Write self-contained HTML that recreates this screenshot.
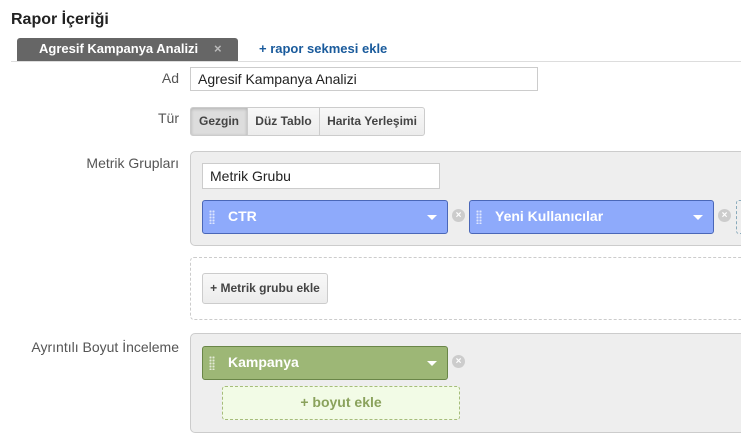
<!DOCTYPE html>
<html><head><meta charset="utf-8"><style>
*{box-sizing:border-box;margin:0;padding:0}
body{width:741px;height:435px;overflow:hidden;background:#fff;font-family:"Liberation Sans",Arial,sans-serif;position:relative;color:#333}
.a{position:absolute}
.lbl{font-size:14px;color:#555;text-align:right;width:179px;left:0}
.inp{border:1px solid #ccc;background:#fff;font-size:14px;color:#222;padding-left:7px;line-height:22px}
.btn{border:1px solid #ccc;background:linear-gradient(#f8f8f8,#ececec);font-size:12px;font-weight:bold;color:#444;text-align:center;line-height:27px}
.chip{border-radius:3px;color:#fff;font-weight:bold;font-size:14px;line-height:31px;padding-left:25px}
.grip{position:absolute;left:6px;top:9px;width:6px;height:14px;background-image:radial-gradient(circle,rgba(255,255,255,.7) 1px,transparent 1.2px);background-size:3px 3px}
.arr{position:absolute;right:10px;top:14px;width:0;height:0;border-left:5px solid transparent;border-right:5px solid transparent;border-top:5px solid #fff}
.x{width:13px;height:13px;border-radius:50%;background:#ccc;color:#fff;font-size:10px;line-height:13px;text-align:center;font-weight:bold}
</style></head><body>
<div class="a" style="left:11px;top:11px;font-size:16px;font-weight:bold;color:#222">Rapor İçeriği</div>
<div class="a" style="left:17px;top:38px;width:221px;height:23px;background:#666;border-radius:3px 3px 0 0;color:#fff;font-weight:bold;font-size:13px;line-height:22px;padding-left:22px">Agresif Kampanya Analizi<span style="position:absolute;left:197px;color:#bbb">×</span></div>
<div class="a" style="left:259px;top:41px;font-size:13px;font-weight:bold;color:#1a5b9c">+ rapor sekmesi ekle</div>
<div class="a" style="left:11px;top:61px;width:730px;height:1px;background:#ddd"></div>
<div class="a lbl" style="top:70px">Ad</div>
<div class="a inp" style="left:190px;top:67px;width:348px;height:24px">Agresif Kampanya Analizi</div>
<div class="a lbl" style="top:110px">Tür</div>
<div class="a btn" style="left:190px;top:107px;width:58px;height:29px;background:#ddd;box-shadow:inset 0 1px 3px rgba(0,0,0,.2);border-radius:3px 0 0 3px">Gezgin</div>
<div class="a btn" style="left:247px;top:107px;width:73px;height:29px">Düz Tablo</div>
<div class="a btn" style="left:319px;top:107px;width:106px;height:29px;border-radius:0 3px 3px 0">Harita Yerleşimi</div>
<div class="a lbl" style="top:155px">Metrik Grupları</div>
<div class="a" style="left:190px;top:151px;width:560px;height:95px;background:#eee;border:1px solid #ccc;border-radius:5px"></div>
<div class="a inp" style="left:202px;top:163px;width:238px;height:26px;line-height:24px">Metrik Grubu</div>
<div class="a chip" style="left:202px;top:200px;width:246px;height:34px;background:#8eaafb;border:1px solid #4a67b8"><span class="grip"></span>CTR<span class="arr"></span></div>
<div class="a x" style="left:452px;top:209px">×</div>
<div class="a chip" style="left:469px;top:200px;width:245px;height:34px;background:#8eaafb;border:1px solid #4a67b8"><span class="grip"></span>Yeni Kullanıcılar<span class="arr"></span></div>
<div class="a x" style="left:718px;top:209px">×</div>
<div class="a" style="left:736px;top:200px;width:20px;height:34px;border:1px dashed #8ab;border-radius:3px"></div>
<div class="a" style="left:190px;top:257px;width:560px;height:63px;border:1px dashed #ccc;border-radius:4px"></div>
<div class="a btn" style="left:202px;top:273px;width:126px;height:31px;border-radius:3px;line-height:29px">+ Metrik grubu ekle</div>
<div class="a lbl" style="top:339px">Ayrıntılı Boyut İnceleme</div>
<div class="a" style="left:190px;top:333px;width:560px;height:100px;background:#eee;border:1px solid #ccc;border-radius:5px"></div>
<div class="a chip" style="left:202px;top:346px;width:246px;height:34px;background:#9db776;border:1px solid #6a8648"><span class="grip"></span>Kampanya<span class="arr"></span></div>
<div class="a x" style="left:452px;top:355px">×</div>
<div class="a" style="left:222px;top:386px;width:238px;height:34px;background:#f2fbe6;border:1px dashed #a6bd7a;border-radius:3px;color:#8aa25c;font-weight:bold;font-size:14px;text-align:center;line-height:31px">+ boyut ekle</div>
</body></html>
